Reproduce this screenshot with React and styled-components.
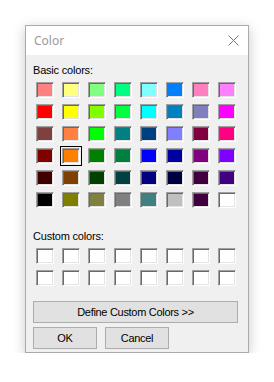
import React from 'react';
import styled, { createGlobalStyle } from 'styled-components';

const GlobalStyle = createGlobalStyle`
  html, body {
    margin: 0;
    padding: 0;
    background: #ffffff;
  }
`;

const basicColors = [
  '#FF8080', '#FFFF80', '#80FF80', '#00FF80', '#80FFFF', '#0080FF', '#FF80C0', '#FF80FF',
  '#FF0000', '#FFFF00', '#80FF00', '#00FF40', '#00FFFF', '#0080C0', '#8080C0', '#FF00FF',
  '#804040', '#FF8040', '#00FF00', '#008080', '#004080', '#8080FF', '#800040', '#FF0080',
  '#800000', '#FF8000', '#008000', '#008040', '#0000FF', '#0000A0', '#800080', '#8000FF',
  '#400000', '#804000', '#004000', '#004040', '#000080', '#000040', '#400040', '#400080',
  '#000000', '#808000', '#808040', '#808080', '#408080', '#C0C0C0', '#400040', '#FFFFFF',
];

const customColors = new Array(16).fill('#FFFFFF');

// index of the orange swatch that has the focus frame
const SELECTED = 25;

const Page = styled.div`
  padding: 25px 0 0 25px;
`;

const Dialog = styled.div`
  width: 224px;
  box-sizing: border-box;
  border: 1px solid #aaaaaa;
  background: #f0f0f0;
  box-shadow: 0 3px 12px rgba(0, 0, 0, 0.22);
`;

const TitleBar = styled.div`
  height: 29px;
  background: #ffffff;
  display: flex;
  align-items: center;
  justify-content: space-between;
  padding: 0 9px 0 8px;
`;

const Title = styled.span`
  font-family: "Noto Sans", "Open Sans", sans-serif;
  font-size: 12px;
  color: #9a9a9a;
`;

const CloseIcon = styled.svg`
  width: 11px;
  height: 11px;
  display: block;
`;

const Body = styled.div`
  padding: 9px 9px 3px 7px;
  display: flex;
  flex-direction: column;
  font-family: "Liberation Sans", Arial, sans-serif;
  font-size: 11px;
  line-height: 13px;
  letter-spacing: -0.2px;
  color: #000000;
`;

const Label = styled.div`
  margin-top: ${p => p.$top || 0}px;
`;

const SwatchGrid = styled.div`
  display: grid;
  grid-template-columns: repeat(8, 18px);
  grid-auto-rows: 16px;
  column-gap: 8px;
  row-gap: 6px;
  margin: 5px 0 0 3px;
`;

const Swatch = styled.div`
  box-sizing: border-box;
  width: 18px;
  height: 16px;
  background: ${p => p.$color};
  border-style: solid;
  border-width: 1px;
  border-color: #a0a0a0 #ffffff #ffffff #a0a0a0;
  box-shadow: inset 1px 1px 0 #696969, inset -1px -1px 0 #e3e3e3;
  outline: ${p => (p.$selected ? '1px solid #000000' : 'none')};
  outline-offset: 1px;
`;

const Button = styled.button`
  box-sizing: border-box;
  height: 22px;
  width: ${p => p.$width}px;
  margin: 0;
  padding: 0;
  background: #e1e1e1;
  border: 1px solid #adadad;
  border-radius: 0;
  font-family: "Liberation Sans", Arial, sans-serif;
  font-size: 11px;
  letter-spacing: -0.3px;
  color: #000000;
  text-align: center;
`;

const DefineRow = styled.div`
  margin-top: 15px;
  display: flex;
`;

const ButtonRow = styled.div`
  margin-top: 4px;
  display: flex;
  gap: 8px;
`;

export default function App() {
  return (
    <Page>
      <GlobalStyle />
      <Dialog>
        <TitleBar>
          <Title>Color</Title>
          <CloseIcon viewBox="0 0 11 11">
            <path d="M0.5 0.5 L10.5 10.5 M10.5 0.5 L0.5 10.5" stroke="#777777" strokeWidth="1" fill="none" />
          </CloseIcon>
        </TitleBar>
        <Body>
          <Label>Basic colors:</Label>
          <SwatchGrid>
            {basicColors.map((c, i) => (
              <Swatch key={i} $color={c} $selected={i === SELECTED} />
            ))}
          </SwatchGrid>
          <Label $top={22}>Custom colors:</Label>
          <SwatchGrid>
            {customColors.map((c, i) => (
              <Swatch key={i} $color={c} />
            ))}
          </SwatchGrid>
          <DefineRow>
            <Button $width={205}>Define Custom Colors &gt;&gt;</Button>
          </DefineRow>
          <ButtonRow>
            <Button $width={64}>OK</Button>
            <Button $width={64}>Cancel</Button>
          </ButtonRow>
        </Body>
      </Dialog>
    </Page>
  );
}
